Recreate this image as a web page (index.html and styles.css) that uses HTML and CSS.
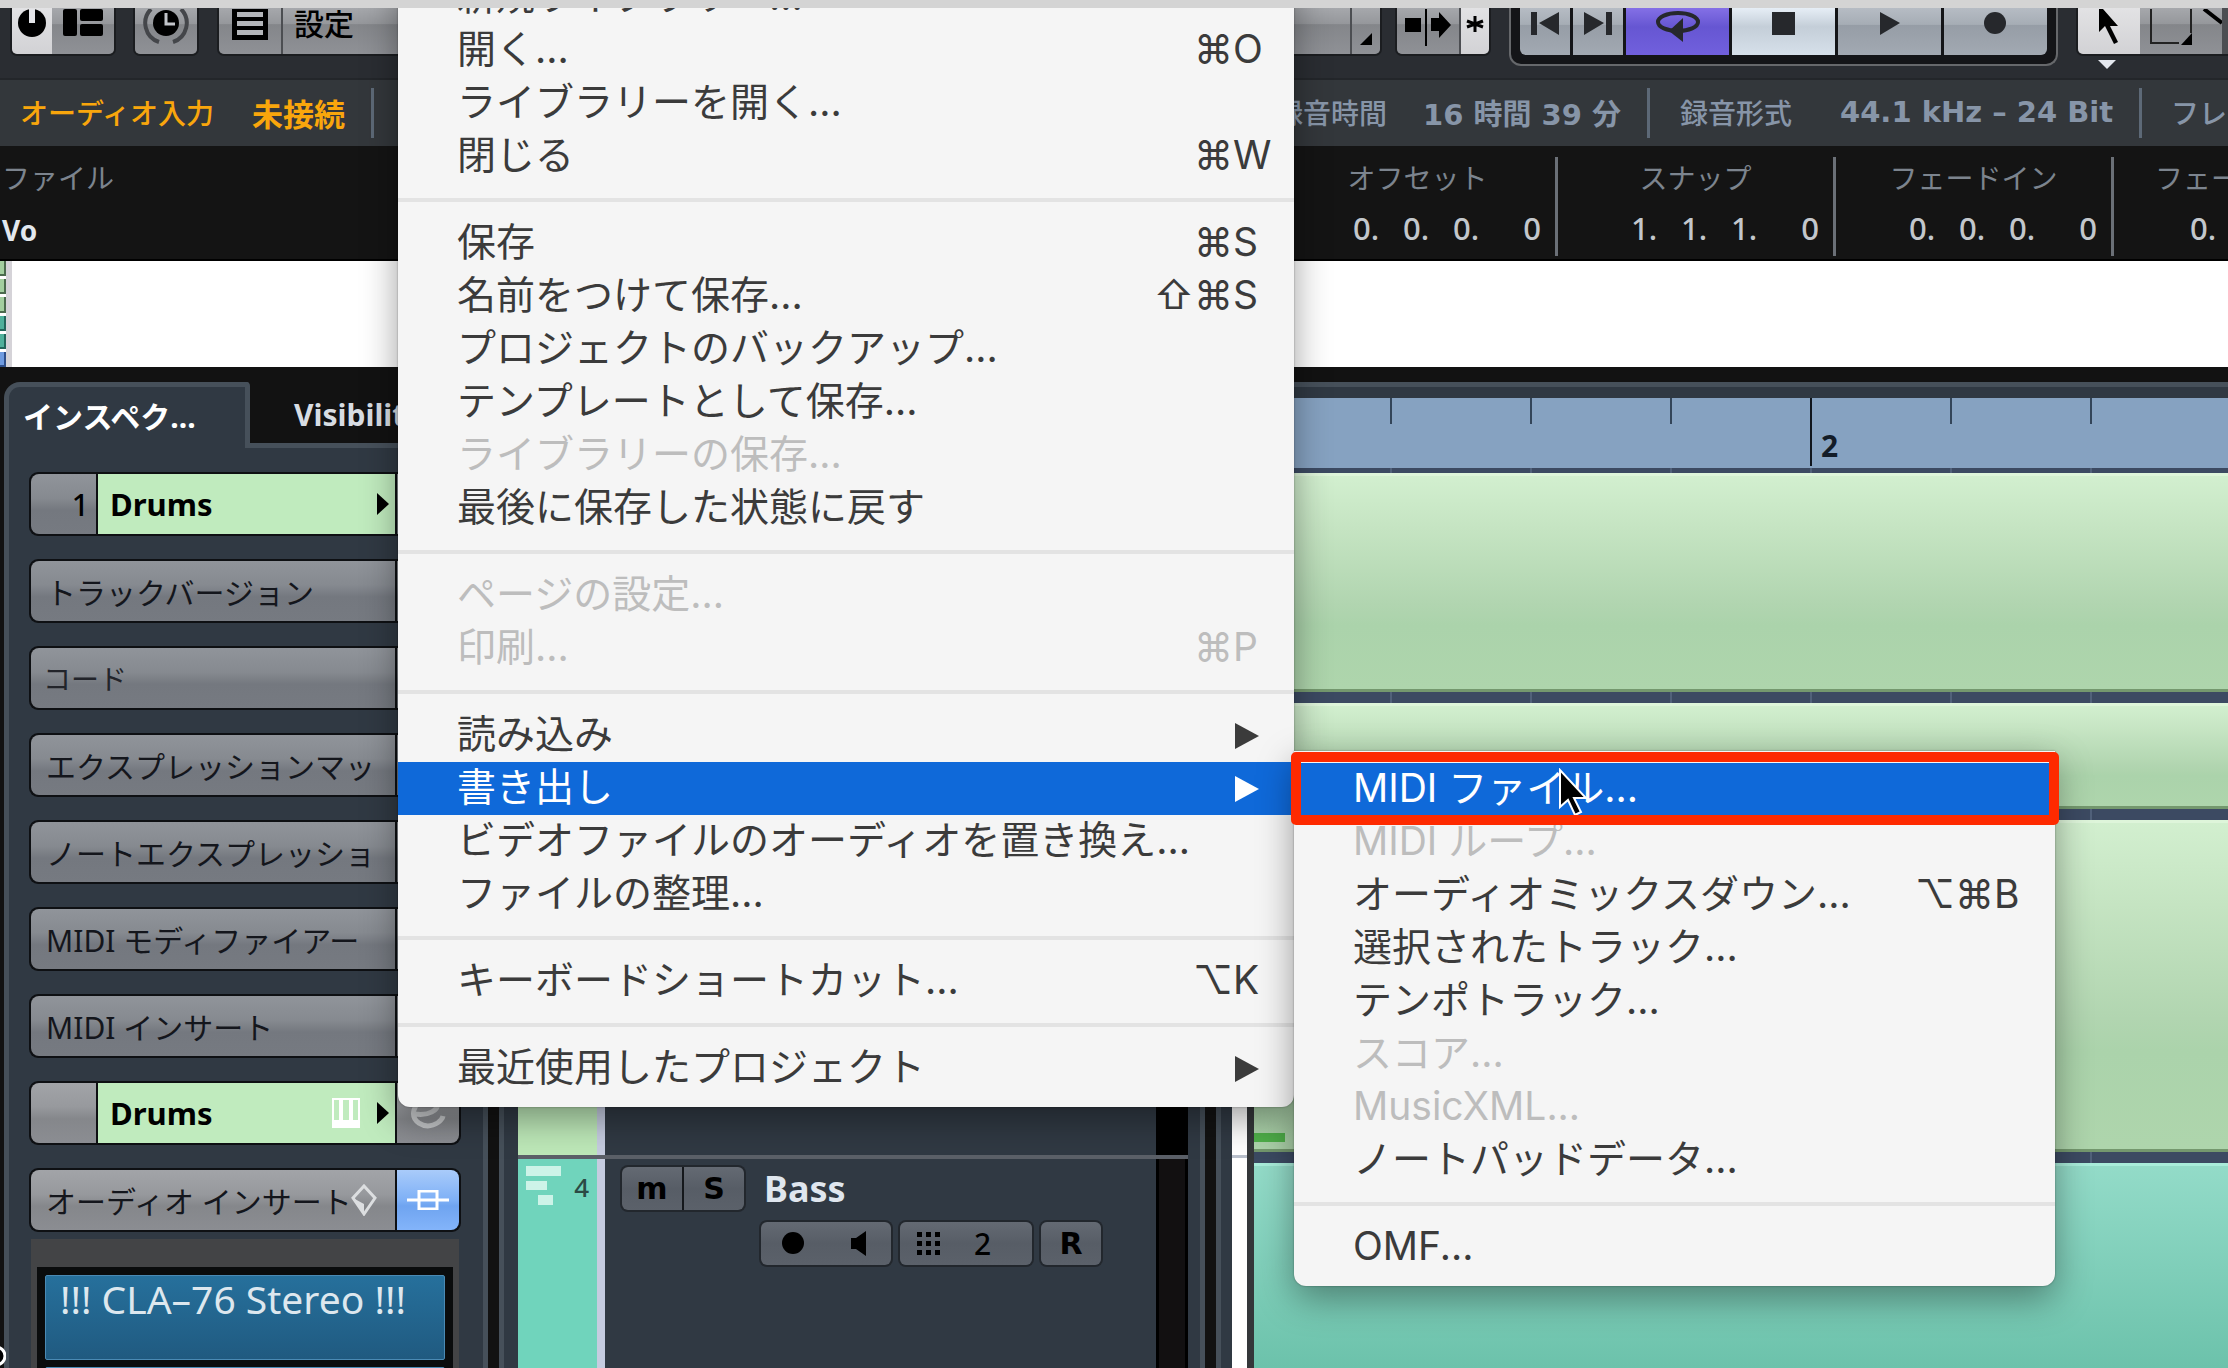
FILE: index.html
```html
<!DOCTYPE html>
<html lang="ja">
<head>
<meta charset="utf-8">
<title>プロジェクト</title>
<link rel="stylesheet" href="styles.css">
</head>
<body>
<div class="titlebar"></div>
<main class="app">
  <header class="toolbar">
    <div class="group group-first">
      <button class="tool on w40" aria-label="有効化"><svg width="28" height="28" viewBox="0 0 28 28"><circle cx="14" cy="14" r="14"/><path d="M11 0h6v14h-6z" fill="#e4e5e9"/></svg></button>
      <button class="tool w62" aria-label="レイアウト"><svg width="40" height="28" viewBox="0 0 40 28"><rect y="0" width="14" height="27" rx="2"/><rect x="17" y="0" width="23" height="12" rx="2"/><rect x="17" y="15" width="23" height="12" rx="2"/></svg></button>
    </div>
    <div class="group group-second">
      <button class="tool w62" aria-label="履歴"><svg width="46" height="38" viewBox="0 0 46 38"><circle cx="23" cy="14" r="13"/><path d="M23 4v11h9" fill="none" stroke="#c2c4c9" stroke-width="3"/><path d="M16 33A20 20 0 0 1 8 0M30 33A20 20 0 0 0 38 0" fill="none" stroke="#44464a" stroke-width="4"/></svg></button>
    </div>
    <div class="group group-config">
      <button class="tool w62" aria-label="リスト"><svg width="36" height="32" viewBox="0 0 36 32"><path d="M0 0h36v31H0z"/><path d="M5 3h26v5H5zM5 12h26v5H5zM5 21h26v5H5z" fill="#b4b6ba"/></svg></button>
      <button class="tool config">設定</button>
      <button class="tool w28 corner" aria-label="開く"><svg width="12" height="12" viewBox="0 0 12 12"><path d="M12 0v12H0z"/></svg></button>
    </div>
    <div class="group group-scroll">
      <button class="tool w62" aria-label="オートスクロール"><svg width="46" height="38" viewBox="0 0 46 38"><path d="M0 9h16v14H0zM26 9h8V3l12 13-12 13v-7h-8z"/><path d="M20 0h2v37h-2z"/></svg></button>
      <button class="tool on w28" aria-label="自動"><svg width="18" height="16" viewBox="0 0 18 16"><path d="M9 0v16M1 5l16 6M17 5L1 11" stroke="#000" stroke-width="3"/></svg></button>
    </div>
    <div class="transport">
      <button class="key w50" aria-label="先頭へ"><svg width="28" height="23" viewBox="0 0 28 23"><path d="M0 0h6v23H0zM28 0v23L8 11z"/></svg></button>
      <button class="key w50" aria-label="末尾へ"><svg width="28" height="23" viewBox="0 0 28 23"><path d="M22 0h6v23h-6zM0 0v23l20-12z"/></svg></button>
      <button class="key cycle" aria-label="サイクル"><svg width="46" height="34" viewBox="0 0 46 34"><ellipse cx="23" cy="12" rx="20" ry="9" fill="none" stroke="#26282c" stroke-width="4"/><path d="M28 8v24L14 21z"/></svg></button>
      <button class="key stop" aria-label="停止"><svg width="23" height="23" viewBox="0 0 23 23"><path d="M0 0h23v23H0z"/></svg></button>
      <button class="key" aria-label="再生"><svg width="20" height="23" viewBox="0 0 20 23"><path d="M0 0l20 11L0 23z"/></svg></button>
      <button class="key" aria-label="録音"><svg width="23" height="23" viewBox="0 0 23 23"><circle cx="11" cy="11" r="11"/></svg></button>
    </div>
    <div class="tools">
      <div class="group group-tools">
        <button class="tool on w62" aria-label="選択"><svg width="24" height="36" viewBox="0 0 24 36"><path d="M2 0v23l6-6 9 18 4-2-8-16h8L6 0z"/></svg></button>
        <button class="tool w62" aria-label="範囲"><svg width="42" height="36" viewBox="0 0 42 36"><path d="M1 0v34h28M41 0v24" fill="none" stroke="#222" stroke-width="2"/><path d="M42 24v12H31z"/></svg></button>
        <button class="tool" aria-label="分割"><svg width="20" height="20" viewBox="0 0 20 20"><path d="M2 0l18 14" stroke="#000" stroke-width="4"/></svg></button>
      </div>
      <svg class="marker" width="18" height="9" viewBox="0 0 18 9"><path d="M0 0h18L9 9z" fill="#e4e8ee"/></svg>
    </div>
  </header>

  <section class="status">
    <div class="status-cell warn"><span>オーディオ入力</span><b>未接続</b></div>
    <div class="status-cell time"><span>最大録音時間</span><b>16 時間 39 分</b></div>
    <div class="status-cell format"><span>録音形式</span><b>44.1 kHz – 24 Bit</b></div>
    <div class="status-cell pull"><span>フレームレート</span></div>
  </section>

  <section class="info">
    <div class="info-cell file"><span>ファイル</span><b>Vo</b></div>
    <div class="info-cell"><span>オフセット</span><p><i>0.</i><i>0.</i><i>0.</i><i>0</i></p></div>
    <div class="info-cell"><span>スナップ</span><p><i>1.</i><i>1.</i><i>1.</i><i>0</i></p></div>
    <div class="info-cell"><span>フェードイン</span><p><i>0.</i><i>0.</i><i>0.</i><i>0</i></p></div>
    <div class="info-cell last"><span>フェードアウト</span><p><i>0.</i><i>0.</i><i>0.</i><i>0</i></p></div>
  </section>

  <section class="overview">
    <div class="minis"><i></i><i></i><i></i><i class="teal"></i><i class="teal"></i><i class="blue"></i></div>
  </section>

  <section class="workspace">
    <aside class="inspector">
      <nav class="tabs"><button class="tab active">インスペク...</button><button class="tab">Visibility</button></nav>
      <div class="panel">
        <div class="slot"><span class="cell num">1</span><button class="cell name">Drums<svg class="tri" width="12" height="22" viewBox="0 0 12 22"><path d="M0 0l12 11L0 22z"/></svg></button><button class="cell side" aria-label="編集"></button></div>
        <div class="slot"><button class="cell label">トラックバージョン</button><span class="cell side"></span></div>
        <div class="slot"><button class="cell label small">コード</button><span class="cell side"></span></div>
        <div class="slot"><button class="cell label">エクスプレッションマッ</button><span class="cell side"></span></div>
        <div class="slot"><button class="cell label">ノートエクスプレッショ</button><span class="cell side"></span></div>
        <div class="slot"><button class="cell label">MIDI モディファイアー</button><span class="cell side"></span></div>
        <div class="slot"><button class="cell label">MIDI インサート</button><span class="cell side"></span></div>
        <div class="slot light"><span class="cell num"></span><button class="cell name">Drums<svg class="keys" width="28" height="30" viewBox="0 0 28 30"><path d="M1 1h26v28H1z" fill="#c0ebbe" stroke="#fff" stroke-width="2"/><path d="M9 1v22M19 1v22" stroke="#fff" stroke-width="4"/><path d="M0 22h28v8H0z" fill="#fff"/></svg><svg class="tri" width="12" height="22" viewBox="0 0 12 22"><path d="M0 0l12 11L0 22z"/></svg></button><button class="cell side" aria-label="チャンネル設定"><svg width="38" height="34" viewBox="0 0 38 34"><path d="M6 18C20 20 30 14 28 7S8 2 5 14s10 18 19 15 10-9 10-9" fill="none" stroke="#c4c6c8" stroke-width="5"/></svg></button></div>
        <div class="slot light"><button class="cell label">オーディオ インサート<svg class="diamond" width="26" height="32" viewBox="0 0 26 32"><path d="M13 2l11 12-11 16L2 14z" fill="none" stroke="#dcdee0" stroke-width="3"/><path d="M2 14l11 6v10z" fill="#dcdee0"/></svg></button><button class="cell side bypass" aria-label="バイパス"><svg width="42" height="20" viewBox="0 0 42 20"><path d="M0 10h42M12 1h18v18H12z" fill="none" stroke="#fff" stroke-width="3"/></svg></button></div>
        <div class="rack"><div class="rack-well"><button class="insert">!!! CLA–76 Stereo !!!</button><button class="insert" aria-label="空きスロット"></button></div></div>
      </div>
      <svg class="edge-mark" width="6" height="24" viewBox="0 0 6 24"><circle cx="-4" cy="12" r="9" fill="#000" stroke="#fff" stroke-width="3"/></svg>
    </aside>

    <section class="tracks">
      <div class="track upper"><div class="strip green"></div><div class="track-body"></div><div class="meter"></div></div>
      <div class="track">
        <div class="strip teal"><svg width="36" height="40" viewBox="0 0 36 40"><path d="M0 0h35v10H0zM0 15h21v9H0zM12 29h15v10H12z" fill="#cdf3e8"/></svg><span>4</span></div>
        <div class="track-body">
          <div class="track-line"><div class="pair"><button class="ms">m</button><button class="ms">S</button></div><b>Bass</b></div>
          <div class="track-line controls">
            <div class="pair rec"><button aria-label="録音可能"><svg width="23" height="23" viewBox="0 0 23 23"><circle cx="11" cy="11" r="11"/></svg></button><button aria-label="モニター"><svg width="15" height="25" viewBox="0 0 15 25"><path d="M0 7h5l10-7v25L5 18H0z"/></svg></button></div>
            <button class="pad"><svg width="23" height="23" viewBox="0 0 23 23"><path d="M0 0h5v5H0zM9 0h5v5H9zM18 0h5v5h-5zM0 9h5v5H0zM9 9h5v5H9zM18 9h5v5h-5zM0 18h5v5H0zM9 18h5v5H9zM18 18h5v5h-5z"/></svg>2</button>
            <button class="ms read">R</button>
          </div>
        </div>
        <div class="meter"></div>
      </div>
    </section>

    <section class="arrange">
      <div class="gutter"><div></div><div></div></div>
      <div class="lanes">
        <div class="ruler"><div class="bar">2</div></div>
        <div class="grid">
          <div class="event e1"></div>
          <div class="event e2"></div>
          <div class="event e3"><i class="note"></i></div>
          <div class="event e4"></div>
        </div>
      </div>
    </section>
  </section>

  <div class="menu file-menu" role="menu">
    <button class="item" role="menuitem">新規ライブラリー...</button>
    <button class="item" role="menuitem">開く...<kbd>⌘<span>O</span></kbd></button>
    <button class="item" role="menuitem">ライブラリーを開く...</button>
    <button class="item" role="menuitem">閉じる<kbd>⌘<span>W</span></kbd></button>
    <hr>
    <button class="item" role="menuitem">保存<kbd>⌘<span>S</span></kbd></button>
    <button class="item" role="menuitem">名前をつけて保存...<kbd>⇧⌘<span>S</span></kbd></button>
    <button class="item" role="menuitem">プロジェクトのバックアップ...</button>
    <button class="item" role="menuitem">テンプレートとして保存...</button>
    <button class="item" role="menuitem" disabled>ライブラリーの保存...</button>
    <button class="item" role="menuitem">最後に保存した状態に戻す</button>
    <hr>
    <button class="item" role="menuitem" disabled>ページの設定...</button>
    <button class="item" role="menuitem" disabled>印刷...<kbd>⌘<span>P</span></kbd></button>
    <hr>
    <button class="item" role="menuitem">読み込み<svg class="more" width="24" height="26" viewBox="0 0 24 26"><path d="M0 0l24 13L0 26z"/></svg></button>
    <button class="item selected" role="menuitem">書き出し<svg class="more" width="24" height="26" viewBox="0 0 24 26"><path d="M0 0l24 13L0 26z"/></svg></button>
    <button class="item" role="menuitem">ビデオファイルのオーディオを置き換え...</button>
    <button class="item" role="menuitem">ファイルの整理...</button>
    <hr>
    <button class="item" role="menuitem">キーボードショートカット...<kbd>⌥<span>K</span></kbd></button>
    <hr>
    <button class="item" role="menuitem">最近使用したプロジェクト<svg class="more" width="24" height="26" viewBox="0 0 24 26"><path d="M0 0l24 13L0 26z"/></svg></button>
  </div>

  <div class="menu export-menu" role="menu">
    <button class="item selected" role="menuitem">MIDI ファイル...</button>
    <button class="item" role="menuitem" disabled>MIDI ループ...</button>
    <button class="item" role="menuitem">オーディオミックスダウン...<kbd>⌥⌘<span>B</span></kbd></button>
    <button class="item" role="menuitem">選択されたトラック...</button>
    <button class="item" role="menuitem">テンポトラック...</button>
    <button class="item" role="menuitem" disabled>スコア...</button>
    <button class="item" role="menuitem" disabled>MusicXML...</button>
    <button class="item" role="menuitem">ノートパッドデータ...</button>
    <hr>
    <button class="item" role="menuitem">OMF...</button>
    <svg class="cursor" width="30" height="48" viewBox="0 0 30 48"><path d="M2 2v37l8-7 7 15 6-3-7-14h12z" fill="#000" stroke="#fff" stroke-width="2"/></svg>
    <div class="callout"></div>
  </div>
</main>
</body>
</html>
```
FILE: styles.css
```css
* { box-sizing: border-box; }

body {
  margin: 0;
  height: 100vh;
  display: flex;
  flex-direction: column;
  overflow: hidden;
  background: #121212;
  font-family: "Noto Sans", "Noto Sans CJK JP", sans-serif;
  font-size: 28px;
}

button {
  margin: 0;
  padding: 0;
  border: 0;
  background: none;
  font: inherit;
  color: inherit;
  white-space: nowrap;
}

svg { display: block; flex: none; }
i { font-style: normal; }
p { margin: 0; }

.titlebar { height: 8px; flex: none; background: #d4d4d4; }

.app {
  position: relative;
  flex: 1;
  min-height: 0;
  display: flex;
  flex-direction: column;
  overflow: hidden;
}

/* Toolbar */
.toolbar {
  display: flex;
  align-items: flex-start;
  flex: none;
  height: 72px;
  background: #2a2d32;
  border-bottom: 2px solid #23262a;
  overflow: hidden;
}

.group {
  display: flex;
  flex: none;
  height: 46px;
  gap: 2px;
  border-radius: 0 0 5px 5px;
  background: #4c4e52;
  box-shadow: 0 0 0 2px #1b1d20;
  overflow: hidden;
}
.group-first { margin-left: 12px; gap: 0; }
.group-second { margin-left: 21px; }
.group-config { margin-left: 22px; flex: 1; }
.group-scroll { margin-left: 17px; }
.group-tools { border-radius: 0 0 0 5px; gap: 0; }

.tools { flex: none; width: 150px; margin-left: 20px; }
.marker { margin: 6px 0 0 20px; }

.tool {
  display: flex;
  justify-content: center;
  align-items: flex-start;
  padding-top: 1px;
  height: 46px;
  background: linear-gradient(#a6a8ac, #95979b 35%, #84868a 36%, #8f9196);
}
.tool.on { background: linear-gradient(#e2e2e4, #d2d2d5); }
.w28 { width: 28px; }
.w40 { width: 40px; }
.w62 { width: 62px; }
.config {
  flex: 1;
  justify-content: flex-start;
  padding-left: 11px;
  font-size: 30px;
  line-height: 30px;
  font-weight: 500;
}
.corner { align-items: flex-end; padding-bottom: 9px; }
.group-scroll .on { padding-top: 8px; }

.transport {
  display: flex;
  flex: none;
  gap: 3px;
  height: 58px;
  margin-left: 20px;
  padding: 0 9px 9px;
  background: #141518;
  border: solid #66686b;
  border-width: 0 2px 2px;
  border-radius: 0 0 12px 12px;
}
.key {
  display: flex;
  justify-content: center;
  align-items: flex-start;
  width: 103px;
  padding-top: 4px;
  background: linear-gradient(#b6bcc4, #a6adb5 35%, #969da6 36%, #a2a9b2);
  fill: #26282c;
}
.key.w50 { width: 50px; }
.key:first-child { border-radius: 0 0 0 6px; }
.key:last-child { border-radius: 0 0 6px 0; }
.key.cycle { background: linear-gradient(#8470e6, #6656d2 40%, #7160dd); padding-top: 2px; }
.key.stop { background: linear-gradient(#e6eef6, #c4ced8 40%, #d6e0ea); }

/* Status strip */
.status {
  display: flex;
  justify-content: space-between;
  align-items: center;
  flex: none;
  height: 66px;
  background: #33373b;
  color: #8795a8;
  overflow: hidden;
}
.status-cell {
  display: flex;
  flex: none;
  align-items: center;
  height: 50px;
  padding-bottom: 2px;
  white-space: nowrap;
}
.status-cell span { font-weight: 500; }
.status-cell b { font-family: "DejaVu Sans", "Noto Sans CJK JP", sans-serif; font-size: 29px; }
.warn { gap: 38px; padding-left: 20px; width: 374px; color: #f9a60c; border-right: 3px solid #5d6977; }
.warn b { font-size: 31px; }
.time { gap: 36px; margin-left: auto; padding-right: 26px; border-right: 3px solid #5d6977; }
.format { gap: 48px; padding-left: 30px; width: 492px; border-right: 3px solid #5d6977; }
.pull { width: 86px; padding-left: 29px; overflow: hidden; }

/* Event info line */
.info {
  display: flex;
  flex: none;
  height: 115px;
  padding: 11px 0 3px;
  background: #141414;
  border-bottom: 2px solid #000;
  color: #7c848e;
}
.info-cell {
  display: flex;
  flex: none;
  flex-direction: column;
  width: 278px;
  border-right: 3px solid #6b7077;
  text-align: center;
  line-height: 42px;
  white-space: nowrap;
}
.info-cell p {
  display: flex;
  justify-content: flex-end;
  padding-top: 8px;
  padding-right: 14px;
  font-size: 31px;
  font-weight: 500;
  color: #c3c7cc;
  text-align: left;
}
.info-cell i { width: 50px; }
.info-cell i:last-child { width: 38px; text-align: right; }
.info-cell.file { flex: 1; border: 0; padding-left: 2px; text-align: left; }
.info-cell.file b { padding-top: 10px; color: #e3e8ee; }
.info-cell.last { border: 0; margin-right: -164px; }

/* Overview */
.overview { flex: none; height: 106px; background: #fff; }
.minis {
  display: flex;
  flex-direction: column;
  gap: 3px;
  width: 12px;
  height: 106px;
  border-right: 6px solid #d5d3d8;
  background: #fff;
}
.minis i { flex: 1; background: #a3cf9f; border: solid #4b6a4d; border-width: 0 2px 2px 0; }
.minis .teal { background: #4fb09b; border-color: #23665b; }
.minis .blue { background: #6f9be0; border-color: #2f4f8a; }

/* Workspace */
.workspace {
  display: flex;
  gap: 11px;
  flex: 1;
  min-height: 0;
  padding: 15px 0 0 4px;
  background: #121212;
}

.inspector {
  display: flex;
  flex-direction: column;
  flex: none;
  width: 484px;
}
.tabs { display: flex; flex: none; height: 66px; font-size: 30px; font-weight: bold; color: #d8dde3; }
.tab { flex: 1; padding: 4px 0 0 44px; text-align: left; border-bottom: 5px solid #46505a; }
.tab.active {
  flex: none;
  width: 246px;
  padding: 0 0 6px 14px;
  color: #fff;
  background: #303943;
  border: solid #46505a;
  border-width: 5px 5px 0 5px;
  border-radius: 16px 4px 0 0;
}
.panel {
  display: flex;
  flex-direction: column;
  gap: 23px;
  flex: 1;
  min-height: 0;
  padding: 24px 22px 0 20px;
  border: solid #46505a;
  border-width: 0 5px;
  background: #303943;
  overflow: hidden;
}

.slot {
  display: flex;
  gap: 2px;
  flex: none;
  height: 64px;
  padding: 2px;
  border-radius: 9px;
  background: #0e1013;
}
.cell {
  display: flex;
  align-items: center;
  background: linear-gradient(#90949a, #868a90 40%, #74787f 60%, #767a81);
}
.light .cell { background: linear-gradient(#a2a4a8, #97999d 40%, #85878b 60%, #8b8d92); }
.num { width: 65px; justify-content: flex-end; padding-right: 7px; font-size: 30px; font-weight: 500; border-radius: 8px 0 0 8px; }
.slot .name { flex: 1; padding-left: 12px; background: #c0ebbe; font-size: 31px; font-weight: bold; }
.name .tri { margin: 0 6px 0 auto; }
.name .keys { margin-left: auto; }
.name .keys + .tri { margin-left: 17px; }
.label {
  flex: 1;
  padding-left: 15px;
  font-size: 30px;
  color: #14161c;
  border-radius: 8px 0 0 8px;
}
.label.small { padding-left: 12px; font-size: 28px; color: #22242a; }
.diamond { margin-left: -1px; }
.side { width: 62px; justify-content: center; border-radius: 0 8px 8px 0; }
.light .bypass { background: linear-gradient(#a9cbfa, #7eb0f6 50%, #6fa4f0 60%, #83b4fa); }

.rack {
  flex: none;
  margin: -16px 2px 0;
  padding: 28px 6px 0;
  background: #434446;
}
.rack-well { display: flex; flex-direction: column; gap: 7px; padding: 8px; background: #0a0c0d; }
.insert {
  display: flex;
  height: 85px;
  padding-left: 14px;
  border: 1px solid #4a8ab4;
  border-radius: 2px;
  background: linear-gradient(#26709c, #205a80);
  color: #dde7ee;
  font-size: 39px;
  line-height: 46px;
}
.edge-mark { position: absolute; left: 0; bottom: 0; }

/* Track list */
.tracks {
  display: flex;
  flex-direction: column;
  flex: none;
  width: 706px;
  padding: 0 12px 0 14px;
  border: solid #46505a;
  border-width: 5px 5px 0;
  background: #303943;
}
.track { display: flex; flex: 1; min-height: 0; }
.track.upper { flex: none; height: 772px; border-bottom: 4px solid #5b6068; }
.strip {
  display: flex;
  justify-content: space-between;
  align-items: flex-start;
  flex: none;
  width: 87px;
  padding: 7px 17px 0 8px;
  border-right: 8px solid #c5cce0;
  font-size: 26px;
  font-weight: 500;
  color: #2b4a44;
}
.strip span { line-height: 42px; margin-right: -9px; }
.strip.green { background: #bde8b8; }
.strip.teal { background: #70d4bc; }
.track-body { flex: 1; padding: 8px 0 0 17px; }
.track-line { display: flex; align-items: center; gap: 20px; height: 43px; }
.track-line b { font-size: 36px; line-height: 43px; color: #dfe6ee; }
.track-line.controls { gap: 9px; margin: 12px 0 0 139px; }
.pair { display: flex; gap: 2px; }
.track-line button {
  display: flex;
  align-items: center;
  justify-content: center;
  height: 43px;
  background: linear-gradient(#646a73, #575d66 50%, #5b616a);
}
.pair, .pad, .read { border-radius: 6px; box-shadow: 0 0 0 2px #22272d; overflow: hidden; background: #15181c; }
.ms { width: 60px; font-family: "DejaVu Sans", sans-serif; font-size: 30px; font-weight: bold; }
.rec { gap: 0; }
.rec button { width: 65px; }
.pad { width: 132px; gap: 34px; padding-right: 24px; font-size: 30px; font-weight: 500; }
.meter { flex: none; width: 32px; background: #121011; border: 3px solid #000; border-width: 0 3px; }
.upper .meter { background: #000; }

/* Arrangement */
.arrange {
  display: flex;
  flex: 1;
  min-width: 0;
  padding: 11px 0 0 11px;
  border: solid #46505a;
  border-width: 5px 0 0 5px;
  background: #303943;
}
.gutter { display: flex; flex-direction: column; gap: 3px; flex: none; width: 22px; border-right: 7px solid #34373a; background: #b9c0cc; }
.gutter div { flex: 1; background: #fff; }
.gutter div:first-child { flex: none; height: 757px; }
.lanes { display: flex; flex-direction: column; flex: 1; min-width: 0; }
.ruler {
  flex: none;
  height: 70px;
  background: repeating-linear-gradient(90deg, transparent 0 136px, #334559 136px 138px, transparent 138px 140px) 0 0 / 100% 26px no-repeat #86a2c1;
}
.bar {
  margin-left: 556px;
  height: 68px;
  padding: 27px 0 0 9px;
  border-left: 2px solid #10161e;
  font-size: 30px;
  line-height: 42px;
  font-weight: bold;
  color: #131c28;
}
.grid {
  display: flex;
  flex-direction: column;
  gap: 11px;
  flex: 1;
  padding-top: 5px;
  background: repeating-linear-gradient(90deg, transparent 0 136px, #51617a 136px 138px, transparent 138px 140px) #3c4a62;
}
.event {
  flex: none;
  border-top: 3px solid #def5da;
  border-bottom: 3px solid #74986e;
  background: linear-gradient(#d2efcf, #c5e4c2 25%, #b1d5b0 60%, #abd3ab 70%, #aed5ac);
}
.e1 { height: 219px; }
.e2 { height: 106px; }
.e3 { height: 332px; display: flex; align-items: flex-end; padding-bottom: 7px; }
.e4 { flex: 1; border-top-color: #a9ecda; border-bottom: 0; background: linear-gradient(#93dbc8, #6cc2ab); }
.note { width: 31px; height: 9px; background: #50b14b; }

/* Menus */
.menu {
  position: absolute;
  display: flex;
  flex-direction: column;
  background: #f5f5f5;
  color: #3b3b3b;
  font-family: Inter, "Noto Sans CJK JP", sans-serif;
  font-size: 39px;
  box-shadow: 0 12px 36px rgba(0, 0, 0, .38), 0 0 2px rgba(0, 0, 0, .4);
}
.file-menu { left: 398px; top: -37px; width: 896px; padding-bottom: 12px; border-radius: 0 0 12px 12px; }
.export-menu { left: 1294px; top: 743px; width: 761px; padding: 12px 0; border-radius: 0 0 12px 12px; }
.item {
  display: flex;
  align-items: center;
  justify-content: space-between;
  height: 53px;
  padding: 0 24px 4px 59px;
  line-height: 49px;
  text-align: left;
}
.item:disabled { color: #bdbdbd; }
.item.selected { background: #0f69d9; color: #fff; }
.menu hr { width: 100%; height: 4px; margin: 15px 0; border: 0; background: #e3e3e3; }
.item kbd { display: flex; font: inherit; }
.item kbd span { width: 37px; }
.more { margin: 4px 11px 0 0; fill: currentColor; }
.cursor { position: absolute; left: 264px; top: 17px; }
.callout {
  position: absolute;
  inset: 1px -4px auto -3px;
  height: 73px;
  border: 10px solid #fe2a00;
  border-radius: 5px;
}
```
